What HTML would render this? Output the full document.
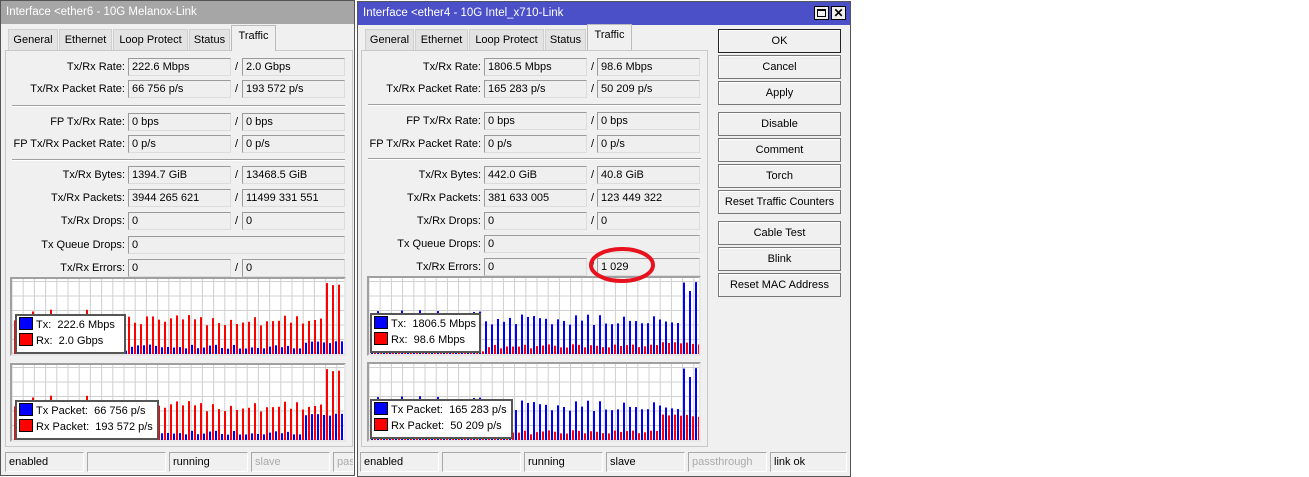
<!DOCTYPE html>
<html><head><meta charset="utf-8"><style>
*{box-sizing:border-box}
body{margin:0;width:1309px;height:475px;background:#fff;position:relative;overflow:hidden;font-family:"Liberation Sans",sans-serif;font-size:11px;color:#000}
.a{position:absolute}
.win{position:absolute;background:#f0f0f0;border:1px solid #555}
.title{position:absolute;left:0;right:0;top:0;height:23px;color:#fff;padding:5px 0 0 5px;font-size:11.5px}
.tab{position:absolute;top:29px;height:21px;background:#e3e3e3;border:1px solid #d0d0d0;border-bottom:none;text-align:center;padding-top:4px}
.tab.act{top:25px;height:26px;background:#f0f0f0;border-color:#bbb;z-index:2}
.panel{position:absolute;border:1px solid #c8c8c8;background:#f0f0f0}
.lbl{position:absolute;text-align:right;width:200px}
.f{position:absolute;height:18px;border:1px solid #9a9a9a;border-right-color:#dcdcdc;border-bottom-color:#dcdcdc;background:#efefef;padding:2px 0 0 3px;white-space:nowrap}
.sep{position:absolute;height:2px;border-top:1px solid #a0a0a0;border-bottom:1px solid #fff}
.btn{position:absolute;left:718px;width:123px;height:24px;border:1px solid #777;background:#f0f0f0;text-align:center;padding-top:5px;box-shadow:inset 1px 1px 0 #fff}
.chart{position:absolute;background:#fff;border:2px solid #a0a0a0;border-right-color:#e8e8e8;border-bottom-color:#e8e8e8;overflow:hidden}
.leg{position:absolute;background:#fff;border:2px solid #555;padding:1px 2px;line-height:16px;font-size:11px;white-space:nowrap;height:40px;overflow:hidden}
.sw{display:inline-block;width:14px;height:13px;border:1px solid #000;vertical-align:-2px;margin-right:3px}
.st{position:absolute;top:452px;height:20px;border:1px solid #a8a8a8;border-right-color:#fff;border-bottom-color:#fff;padding:3px 0 0 3px;white-space:nowrap;overflow:hidden}
</style></head><body>

<div class="win" style="left:0;top:0;width:355px;height:476px">
<div class="title" style="background:#a6a6a6">Interface &lt;ether6 - 10G Melanox-Link</div>
</div>
<div class="tab" style="left:8px;width:50px">General</div>
<div class="tab" style="left:59px;width:53px">Ethernet</div>
<div class="tab" style="left:113px;width:75px">Loop Protect</div>
<div class="tab" style="left:189px;width:41px">Status</div>
<div class="tab act" style="left:231px;width:45px">Traffic</div>
<div class="panel" style="left:5px;top:50px;width:348px;height:397px"></div>

<div class="lbl" style="left:-75px;top:61px">Tx/Rx Rate:</div><div class="f" style="left:128px;top:58px;width:103px">222.6 Mbps</div><div class="a" style="left:235px;top:61px">/</div><div class="f" style="left:242px;top:58px;width:103px">2.0 Gbps</div>
<div class="lbl" style="left:-75px;top:83px">Tx/Rx Packet Rate:</div><div class="f" style="left:128px;top:80px;width:103px">66 756 p/s</div><div class="a" style="left:235px;top:83px">/</div><div class="f" style="left:242px;top:80px;width:103px">193 572 p/s</div>
<div class="sep" style="left:12px;top:105px;width:333px"></div>
<div class="lbl" style="left:-75px;top:116px">FP Tx/Rx Rate:</div><div class="f" style="left:128px;top:113px;width:103px">0 bps</div><div class="a" style="left:235px;top:116px">/</div><div class="f" style="left:242px;top:113px;width:103px">0 bps</div>
<div class="lbl" style="left:-75px;top:138px">FP Tx/Rx Packet Rate:</div><div class="f" style="left:128px;top:135px;width:103px">0 p/s</div><div class="a" style="left:235px;top:138px">/</div><div class="f" style="left:242px;top:135px;width:103px">0 p/s</div>
<div class="sep" style="left:12px;top:159px;width:333px"></div>
<div class="lbl" style="left:-75px;top:169px">Tx/Rx Bytes:</div><div class="f" style="left:128px;top:166px;width:103px">1394.7 GiB</div><div class="a" style="left:235px;top:169px">/</div><div class="f" style="left:242px;top:166px;width:103px">13468.5 GiB</div>
<div class="lbl" style="left:-75px;top:192px">Tx/Rx Packets:</div><div class="f" style="left:128px;top:189px;width:103px">3944 265 621</div><div class="a" style="left:235px;top:192px">/</div><div class="f" style="left:242px;top:189px;width:103px">11499 331 551</div>
<div class="lbl" style="left:-75px;top:215px">Tx/Rx Drops:</div><div class="f" style="left:128px;top:212px;width:103px">0</div><div class="a" style="left:235px;top:215px">/</div><div class="f" style="left:242px;top:212px;width:103px">0</div>
<div class="lbl" style="left:-75px;top:239px">Tx Queue Drops:</div><div class="f" style="left:128px;top:236px;width:217px">0</div>
<div class="lbl" style="left:-75px;top:262px">Tx/Rx Errors:</div><div class="f" style="left:128px;top:259px;width:103px">0</div><div class="a" style="left:235px;top:262px">/</div><div class="f" style="left:242px;top:259px;width:103px">0</div>

<div class="chart" id="c1" style="left:10px;top:277px;width:336px;height:79px"></div>
<div class="chart" id="c2" style="left:10px;top:363px;width:336px;height:79px"></div>
<div class="leg" style="left:15px;top:314px;width:111px"><span class="sw" style="background:#0000ff"></span>Tx:&nbsp; 222.6 Mbps<br><span class="sw" style="background:#ff0000"></span>Rx:&nbsp; 2.0 Gbps</div>
<div class="leg" style="left:15px;top:400px;width:144px"><span class="sw" style="background:#0000ff"></span>Tx Packet:&nbsp; 66 756 p/s<br><span class="sw" style="background:#ff0000"></span>Rx Packet:&nbsp; 193 572 p/s</div>

<div class="st" style="left:5px;width:79px">enabled</div>
<div class="st" style="left:87px;width:79px"></div>
<div class="st" style="left:169px;width:79px">running</div>
<div class="st" style="left:251px;width:79px;color:#aaa">slave</div>
<div class="st" style="left:333px;width:21px;color:#aaa">pass</div>

<div class="win" style="left:357px;top:1px;width:494px;height:476px">
<div class="title" style="background:#4b50c8;top:0;height:23px">Interface &lt;ether4 - 10G Intel_x710-Link</div>
<div class="a" style="left:456px;top:4px;width:15px;height:14px;background:#f0f0f0;border:1px solid #000"><div class="a" style="left:2px;top:2px;width:9px;height:8px;border:1px solid #000;border-top-width:2px"></div></div>
<div class="a" style="left:473px;top:4px;width:15px;height:14px;background:#f0f0f0;border:1px solid #000;font-weight:bold;font-size:12px;line-height:12px;text-align:center">✕</div>
</div>
<div class="tab" style="left:365px;width:49px">General</div>
<div class="tab" style="left:415px;width:53px">Ethernet</div>
<div class="tab" style="left:469px;width:75px">Loop Protect</div>
<div class="tab" style="left:545px;width:41px">Status</div>
<div class="tab act" style="left:587px;width:45px;top:24px">Traffic</div>
<div class="panel" style="left:361px;top:50px;width:347px;height:397px"></div>

<div class="lbl" style="left:281px;top:61px">Tx/Rx Rate:</div><div class="f" style="left:484px;top:58px;width:103px">1806.5 Mbps</div><div class="a" style="left:591px;top:61px">/</div><div class="f" style="left:597px;top:58px;width:103px">98.6 Mbps</div>
<div class="lbl" style="left:281px;top:83px">Tx/Rx Packet Rate:</div><div class="f" style="left:484px;top:80px;width:103px">165 283 p/s</div><div class="a" style="left:591px;top:83px">/</div><div class="f" style="left:597px;top:80px;width:103px">50 209 p/s</div>
<div class="sep" style="left:368px;top:104px;width:333px"></div>
<div class="lbl" style="left:281px;top:115px">FP Tx/Rx Rate:</div><div class="f" style="left:484px;top:112px;width:103px">0 bps</div><div class="a" style="left:591px;top:115px">/</div><div class="f" style="left:597px;top:112px;width:103px">0 bps</div>
<div class="lbl" style="left:281px;top:138px">FP Tx/Rx Packet Rate:</div><div class="f" style="left:484px;top:135px;width:103px">0 p/s</div><div class="a" style="left:591px;top:138px">/</div><div class="f" style="left:597px;top:135px;width:103px">0 p/s</div>
<div class="sep" style="left:368px;top:158px;width:333px"></div>
<div class="lbl" style="left:281px;top:169px">Tx/Rx Bytes:</div><div class="f" style="left:484px;top:166px;width:103px">442.0 GiB</div><div class="a" style="left:591px;top:169px">/</div><div class="f" style="left:597px;top:166px;width:103px">40.8 GiB</div>
<div class="lbl" style="left:281px;top:192px">Tx/Rx Packets:</div><div class="f" style="left:484px;top:189px;width:103px">381 633 005</div><div class="a" style="left:591px;top:192px">/</div><div class="f" style="left:597px;top:189px;width:103px">123 449 322</div>
<div class="lbl" style="left:281px;top:215px">Tx/Rx Drops:</div><div class="f" style="left:484px;top:212px;width:103px">0</div><div class="a" style="left:591px;top:215px">/</div><div class="f" style="left:597px;top:212px;width:103px">0</div>
<div class="lbl" style="left:281px;top:238px">Tx Queue Drops:</div><div class="f" style="left:484px;top:235px;width:216px">0</div>
<div class="lbl" style="left:281px;top:261px">Tx/Rx Errors:</div><div class="f" style="left:484px;top:258px;width:103px">0</div><div class="a" style="left:591px;top:261px">/</div><div class="f" style="left:597px;top:258px;width:103px">1 029</div>
<svg class="a" style="left:580px;top:244px;z-index:5" width="76" height="44"><ellipse cx="42" cy="21" rx="31" ry="16" fill="none" stroke="#e8121e" stroke-width="4"/></svg>

<div class="chart" id="c3" style="left:367px;top:276px;width:334px;height:80px"></div>
<div class="chart" id="c4" style="left:367px;top:362px;width:334px;height:80px"></div>
<div class="leg" style="left:370px;top:313px;width:111px"><span class="sw" style="background:#0000ff"></span>Tx:&nbsp; 1806.5 Mbps<br><span class="sw" style="background:#ff0000"></span>Rx:&nbsp; 98.6 Mbps</div>
<div class="leg" style="left:370px;top:399px;width:143px"><span class="sw" style="background:#0000ff"></span>Tx Packet:&nbsp; 165 283 p/s<br><span class="sw" style="background:#ff0000"></span>Rx Packet:&nbsp; 50 209 p/s</div>

<div class="btn" style="top:29px;border-color:#222">OK</div>
<div class="btn" style="top:55px">Cancel</div>
<div class="btn" style="top:81px">Apply</div>
<div class="btn" style="top:112px">Disable</div>
<div class="btn" style="top:138px">Comment</div>
<div class="btn" style="top:164px">Torch</div>
<div class="btn" style="top:190px">Reset Traffic Counters</div>
<div class="btn" style="top:221px">Cable Test</div>
<div class="btn" style="top:247px">Blink</div>
<div class="btn" style="top:273px">Reset MAC Address</div>

<div class="st" style="left:360px;width:79px">enabled</div>
<div class="st" style="left:442px;width:79px"></div>
<div class="st" style="left:524px;width:79px">running</div>
<div class="st" style="left:606px;width:79px">slave</div>
<div class="st" style="left:688px;width:79px;color:#aaa">passthrough</div>
<div class="st" style="left:770px;width:77px">link ok</div>

<script>
function rnd(s){return function(){s=(s*9301+49297)%233280;return s/233280;}}
function chart(id,big,small,seed,pk){
 var el=document.getElementById(id),w=el.clientWidth,h=el.clientHeight,r=rnd(seed);
 var s='<svg width="'+w+'" height="'+h+'">';
 for(var x=0;x<w;x+=11.2)s+='<line x1="'+x+'" y1="0" x2="'+x+'" y2="'+h+'" stroke="#d0d0d0"/>';
 for(var y=h;y>0;y-=14.5)s+='<line x1="0" y1="'+y+'" x2="'+w+'" y2="'+y+'" stroke="#d0d0d0"/>';
 var n=Math.floor(w/6);
 for(var i=0;i<n;i++){
  var x=2+i*6,t=i/n;
  var bh=(0.38+0.14*r())*h; if(t<0.33&&r()<0.4)bh=(0.45+0.15*r())*h; if(t>0.94)bh=(0.8+0.15*r())*h;
  var sh=(0.03+0.03*r())*h; if(t>0.33)sh=(0.07+0.06*r())*h; if(t>0.87)sh=(pk+0.05*r())*h;
  s+='<rect x="'+x+'" y="'+(h-bh)+'" width="2" height="'+bh+'" fill="'+big+'"/>';
  s+='<rect x="'+(x+3)+'" y="'+(h-sh)+'" width="2" height="'+sh+'" fill="'+small+'"/>';
 }
 el.innerHTML=s+'</svg>';
}
chart('c1','#f00','#00f',7,0.12);
chart('c2','#f00','#00f',7,0.3);
chart('c3','#00f','#f00',11,0.12);
chart('c4','#00f','#f00',11,0.3);
</script>
</body></html>
